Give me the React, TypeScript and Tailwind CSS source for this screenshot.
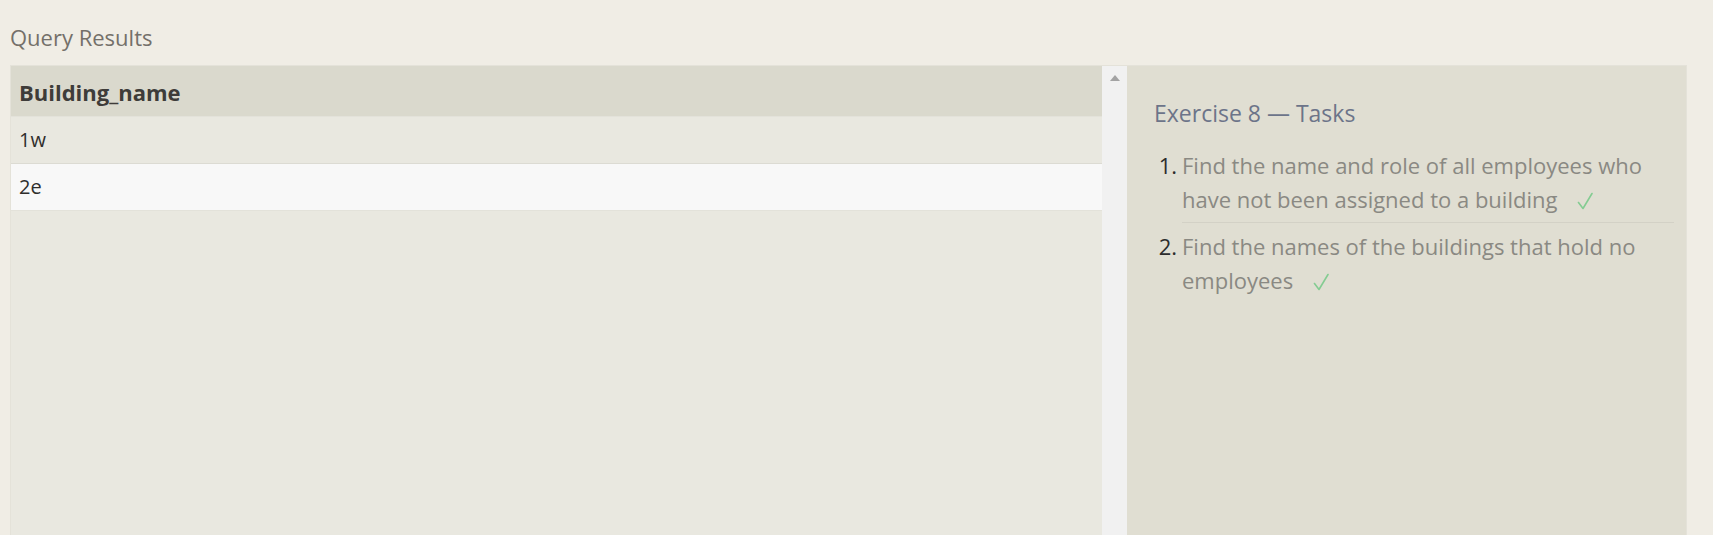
export default function App() {
  const tasks = [
    "Find the name and role of all employees who have not been assigned to a building",
    "Find the names of the buildings that hold no employees",
  ];

  return (
    <div className="min-h-screen bg-[#f0ede5] pl-[10px] pt-[22px] font-['Open_Sans',sans-serif]">
      <h2 className="mb-[13px] text-[22px] leading-[30px] text-[#74706a]">Query Results</h2>

      <div className="flex h-[480px] w-[1677px] border border-[#e4e2d9]">
        {/* results table */}
        <div className="w-[1091px] bg-[#e9e8e0]">
          <div className="h-[51px] border-b border-[#e3e2da] bg-[#dad9cd] pl-[8px] pt-[1px] text-[22px] font-bold leading-[50px] text-[#3e3c39]">
            Building_name
          </div>
          <div className="h-[47px] border-b border-[#dcdbd3] bg-[#e9e8e0] pl-[8px] text-[20px] leading-[46px] text-[#2f2e2c]">
            1w
          </div>
          <div className="h-[47px] border-b border-[#e3e2da] bg-[#f8f8f8] pl-[8px] text-[20px] leading-[46px] text-[#2f2e2c]">
            2e
          </div>
        </div>

        {/* scrollbar */}
        <div className="flex w-[25px] justify-center bg-[#f1f1f1]">
          <div className="mt-[9px] h-0 w-0 border-x-[5px] border-b-[6px] border-x-transparent border-b-[#a3a3a3]" />
        </div>

        {/* tasks panel */}
        <div className="flex-1 bg-[#e0ded2] pl-[27px] pr-[12px] pt-[32px]">
          <h3 className="text-[23px] leading-[30px] text-[#6c7489]">Exercise 8 — Tasks</h3>
          <ol className="mt-[14px]">
            {tasks.map((t, i) => (
              <li key={i} className="flex">
                <span className="w-[28px] shrink-0 pr-[5px] pt-[6px] text-right text-[22px] leading-[34px] text-[#2c2c2c]">
                  {i + 1}.
                </span>
                <div
                  className={
                    i === 0
                      ? "flex-1 border-b border-[#d3d1c6] py-[6px] text-[22px] leading-[34px] text-[#8a8983]"
                      : "flex-1 py-[6px] text-[22px] leading-[34px] text-[#8a8983]"
                  }
                >
                  {t}
                  <svg
                    viewBox="0 0 16 18"
                    className="ml-[20px] inline-block h-[18px] w-[16px] align-[-2px]"
                    fill="none"
                    stroke="#84cc92"
                    strokeWidth="1.6"
                    strokeLinecap="round"
                    strokeLinejoin="round"
                  >
                    <polyline points="1.5,10.5 6,16.5 15,1.5" />
                  </svg>
                </div>
              </li>
            ))}
          </ol>
        </div>
      </div>
    </div>
  );
}
